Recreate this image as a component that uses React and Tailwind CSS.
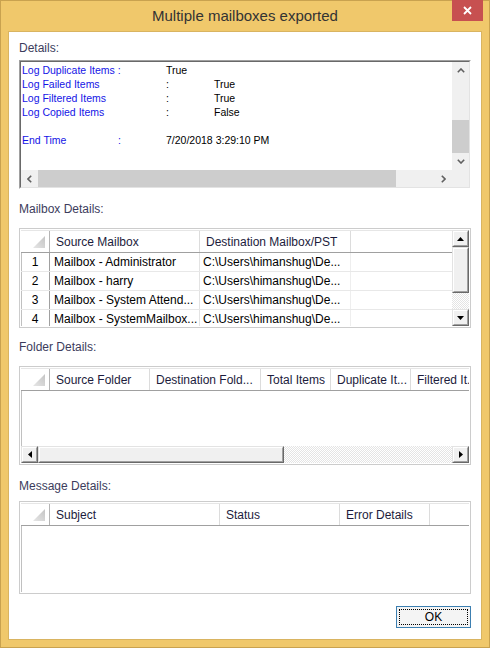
import React from "react";

const FONT = "font-['Liberation_Sans',Arial,sans-serif]";

function ChevUp() {
  return (
    <svg width="8" height="5" viewBox="0 0 8 5">
      <polyline points="0.8,4.2 4,1 7.2,4.2" fill="none" stroke="#606060" strokeWidth="1.6" />
    </svg>
  );
}
function ChevDown() {
  return (
    <svg width="8" height="5" viewBox="0 0 8 5">
      <polyline points="0.8,0.8 4,4 7.2,0.8" fill="none" stroke="#606060" strokeWidth="1.6" />
    </svg>
  );
}
function ChevLeft() {
  return (
    <svg width="5" height="8" viewBox="0 0 5 8">
      <polyline points="4.2,0.8 1,4 4.2,7.2" fill="none" stroke="#606060" strokeWidth="1.6" />
    </svg>
  );
}
function ChevRight() {
  return (
    <svg width="5" height="8" viewBox="0 0 5 8">
      <polyline points="0.8,0.8 4,4 0.8,7.2" fill="none" stroke="#606060" strokeWidth="1.6" />
    </svg>
  );
}

function TriUp() {
  return (
    <svg width="7" height="4" viewBox="0 0 7 4">
      <polygon points="0,4 3.5,0 7,4" fill="#000" />
    </svg>
  );
}
function TriDown() {
  return (
    <svg width="7" height="4" viewBox="0 0 7 4">
      <polygon points="0,0 3.5,4 7,0" fill="#000" />
    </svg>
  );
}
function TriLeft() {
  return (
    <svg width="4" height="7" viewBox="0 0 4 7">
      <polygon points="4,0 0,3.5 4,7" fill="#000" />
    </svg>
  );
}
function TriRight() {
  return (
    <svg width="4" height="7" viewBox="0 0 4 7">
      <polygon points="0,0 4,3.5 0,7" fill="#000" />
    </svg>
  );
}

function Raised({ className, children }) {
  return (
    <div className={`border border-t-[#e3e3e3] border-l-[#e3e3e3] border-r-[#696969] border-b-[#696969] ${className}`}>
      <div className="w-full h-full border border-t-white border-l-white border-r-[#a0a0a0] border-b-[#a0a0a0] bg-[#f0f0f0] flex items-center justify-center">
        {children}
      </div>
    </div>
  );
}

function Corner() {
  return (
    <div className="w-[29px] h-full shrink-0 border-r border-[#b4b4b4] flex items-end justify-end pr-[4px] pb-[4px]">
      <svg width="12" height="12" viewBox="0 0 12 12">
        <defs>
          <linearGradient id="cg" x1="0" y1="1" x2="1" y2="0">
            <stop offset="0" stopColor="#e6e6e6" />
            <stop offset="1" stopColor="#c4c4c4" />
          </linearGradient>
        </defs>
        <polygon points="12,0 12,12 0,12" fill="url(#cg)" />
      </svg>
    </div>
  );
}

function HCell({ className, children, last }) {
  return (
    <div
      className={`h-full shrink-0 flex items-center pl-[6px] whitespace-nowrap overflow-hidden text-[12px] text-[#1c1c3c] ${
        last ? "" : "border-r border-[#dcdcdc]"
      } ${className}`}
    >
      {children}
    </div>
  );
}

function Label({ children, className }) {
  return (
    <div className={`h-[14px] leading-[14px] text-[12px] text-[#3c3c5c] ${className}`}>{children}</div>
  );
}

const mailRows = [
  ["1", "Mailbox - Administrator"],
  ["2", "Mailbox - harry"],
  ["3", "Mailbox - System Attend..."],
  ["4", "Mailbox - SystemMailbox..."],
];

export default function App() {
  return (
    <div className={`w-[490px] h-[648px] bg-[#f0c86b] border border-[#c9a24f] flex flex-col ${FONT}`}>
      {/* Title bar */}
      <div className="h-[30px] relative flex items-center justify-center shrink-0">
        <span className="text-[15px] text-[#333333] mt-[1px]">Multiple mailboxes exported</span>
        <div className="absolute top-[-1px] right-[6px] w-[31px] h-[21px] bg-[#c75050] flex items-center justify-center">
          <svg width="9" height="9" viewBox="0 0 9 9">
            <path d="M1 1 L8 8 M8 1 L1 8" stroke="#ffffff" strokeWidth="1.8" />
          </svg>
        </div>
      </div>

      {/* Client */}
      <div className="ml-[7px] w-[474px] h-[609px] bg-white border border-[#d9b461] px-[10px] flex flex-col">
        <Label className="mt-[9px]">Details:</Label>

        {/* Details box */}
        <div className="mt-[5px] h-[129px] border border-t-[#a0a0a0] border-l-[#a0a0a0] border-r-white border-b-white">
          <div className="h-full border border-t-[#696969] border-l-[#696969] border-r-[#e3e3e3] border-b-[#e3e3e3] flex flex-col">
            <div className="flex h-[108px]">
              <div className="flex-1 bg-white pl-[1px] pt-[1px] text-[10.5px] leading-[14px] text-black whitespace-nowrap">
                <div className="flex">
                  <span className="w-[144px] text-[#1414e6]">Log Duplicate Items :</span>
                  <span>True</span>
                </div>
                <div className="flex">
                  <span className="w-[144px] text-[#1414e6]">Log Failed Items</span>
                  <span className="w-[48px]">:</span>
                  <span>True</span>
                </div>
                <div className="flex">
                  <span className="w-[144px] text-[#1414e6]">Log Filtered Items</span>
                  <span className="w-[48px]">:</span>
                  <span>True</span>
                </div>
                <div className="flex">
                  <span className="w-[144px] text-[#1414e6]">Log Copied Items</span>
                  <span className="w-[48px]">:</span>
                  <span>False</span>
                </div>
                <div className="h-[14px]" />
                <div className="flex">
                  <span className="w-[96px] text-[#1414e6]">End Time</span>
                  <span className="w-[48px] text-[#1414e6]">:</span>
                  <span>7/20/2018 3:29:10 PM</span>
                </div>
              </div>
              <div className="w-[17px] bg-[#f0f0f0] flex flex-col shrink-0">
                <div className="h-[17px] flex items-center justify-center">
                  <ChevUp />
                </div>
                <div className="h-[41px]" />
                <div className="h-[33px] bg-[#cdcdcd]" />
                <div className="flex-1" />
                <div className="h-[17px] flex items-center justify-center">
                  <ChevDown />
                </div>
              </div>
            </div>
            <div className="flex h-[17px] bg-[#f0f0f0]">
              <div className="w-[17px] flex items-center justify-center">
                <ChevLeft />
              </div>
              <div className="w-[358px] bg-[#cdcdcd]" />
              <div className="flex-1" />
              <div className="w-[17px] flex items-center justify-center">
                <ChevRight />
              </div>
              <div className="w-[17px]" />
            </div>
          </div>
        </div>

        <Label className="mt-[13px]">Mailbox Details:</Label>

        {/* Mailbox table */}
        <div className="mt-[12px] h-[100px] border border-[#cccccc] p-[1px]">
          <div className="h-full flex overflow-hidden">
            <div className="flex-1 flex flex-col overflow-hidden">
              <div className="h-[23px] shrink-0 flex border-b border-[#a0a0a0] border-t border-t-[#e6e6e6]">
                <Corner />
                <HCell className="w-[150px]">Source Mailbox</HCell>
                <HCell className="w-[151px]">Destination Mailbox/PST</HCell>
                <HCell className="flex-1" last>
                  {""}
                </HCell>
              </div>
              {mailRows.map(([n, s]) => (
                <div key={n} className="h-[19px] shrink-0 flex border-b border-[#e8e8e8] text-[12px] text-black">
                  <div className="w-[29px] shrink-0 border-l border-[#c0c0c0] border-r border-r-[#a0a0a0] flex items-center justify-center pr-[1px]">
                    {n}
                  </div>
                  <div className="w-[150px] shrink-0 border-r border-[#e3e3e3] flex items-center pl-[4px] whitespace-nowrap overflow-hidden">
                    {s}
                  </div>
                  <div className="w-[151px] shrink-0 border-r border-[#eeeeee] flex items-center pl-[3px] whitespace-nowrap overflow-hidden">
                    C:\Users\himanshug\De...
                  </div>
                  <div className="flex-1" />
                </div>
              ))}
            </div>
            <div className="w-[17px] shrink-0 flex flex-col">
              <Raised className="h-[17px]">
                <TriUp />
              </Raised>
              <Raised className="h-[46px]" />
              <div className="flex-1 bg-[repeating-conic-gradient(#e4e4e4_0_25%,#ffffff_0_50%)] bg-[length:2px_2px]" />
              <Raised className="h-[17px]">
                <TriDown />
              </Raised>
            </div>
          </div>
        </div>

        <Label className="mt-[12px]">Folder Details:</Label>

        {/* Folder table */}
        <div className="mt-[12px] h-[99px] border border-[#cccccc] p-[1px]">
          <div className="h-full flex flex-col overflow-hidden">
            <div className="h-[23px] shrink-0 flex border-b border-[#a0a0a0] border-t border-t-[#e6e6e6] overflow-hidden">
              <Corner />
              <HCell className="w-[100px]">Source Folder</HCell>
              <HCell className="w-[111px]">Destination Fold...</HCell>
              <HCell className="w-[70px]">Total Items</HCell>
              <HCell className="w-[80px]">Duplicate It...</HCell>
              <HCell className="w-[58px]" last>
                Filtered It.
              </HCell>
            </div>
            <div className="flex-1 border-l border-[#c0c0c0]" />
            <div className="h-[17px] shrink-0 flex">
              <Raised className="w-[17px]">
                <TriLeft />
              </Raised>
              <Raised className="w-[246px]" />
              <div className="flex-1 bg-[repeating-conic-gradient(#e4e4e4_0_25%,#ffffff_0_50%)] bg-[length:2px_2px]" />
              <Raised className="w-[17px]">
                <TriRight />
              </Raised>
            </div>
          </div>
        </div>

        <Label className="mt-[14px]">Message Details:</Label>

        {/* Message table */}
        <div className="mt-[8px] h-[93px] border border-[#cccccc] p-[1px]">
          <div className="h-full flex flex-col overflow-hidden">
            <div className="h-[23px] shrink-0 flex border-b border-[#a0a0a0] border-t border-t-[#e6e6e6]">
              <Corner />
              <HCell className="w-[170px]">Subject</HCell>
              <HCell className="w-[120px]">Status</HCell>
              <HCell className="w-[90px]">Error Details</HCell>
              <HCell className="flex-1" last>
                {""}
              </HCell>
            </div>
            <div className="flex-1 border-l border-[#c0c0c0]" />
          </div>
        </div>

        <div className="mt-[12px] flex justify-end">
          <button className="w-[75px] h-[22px] border border-[#3c7fb1] bg-[#f4f4f4] p-[2px]">
            <div className="w-full h-full border border-dotted border-black flex items-center justify-center text-[12px] text-black leading-none">
              OK
            </div>
          </button>
        </div>
      </div>
    </div>
  );
}
